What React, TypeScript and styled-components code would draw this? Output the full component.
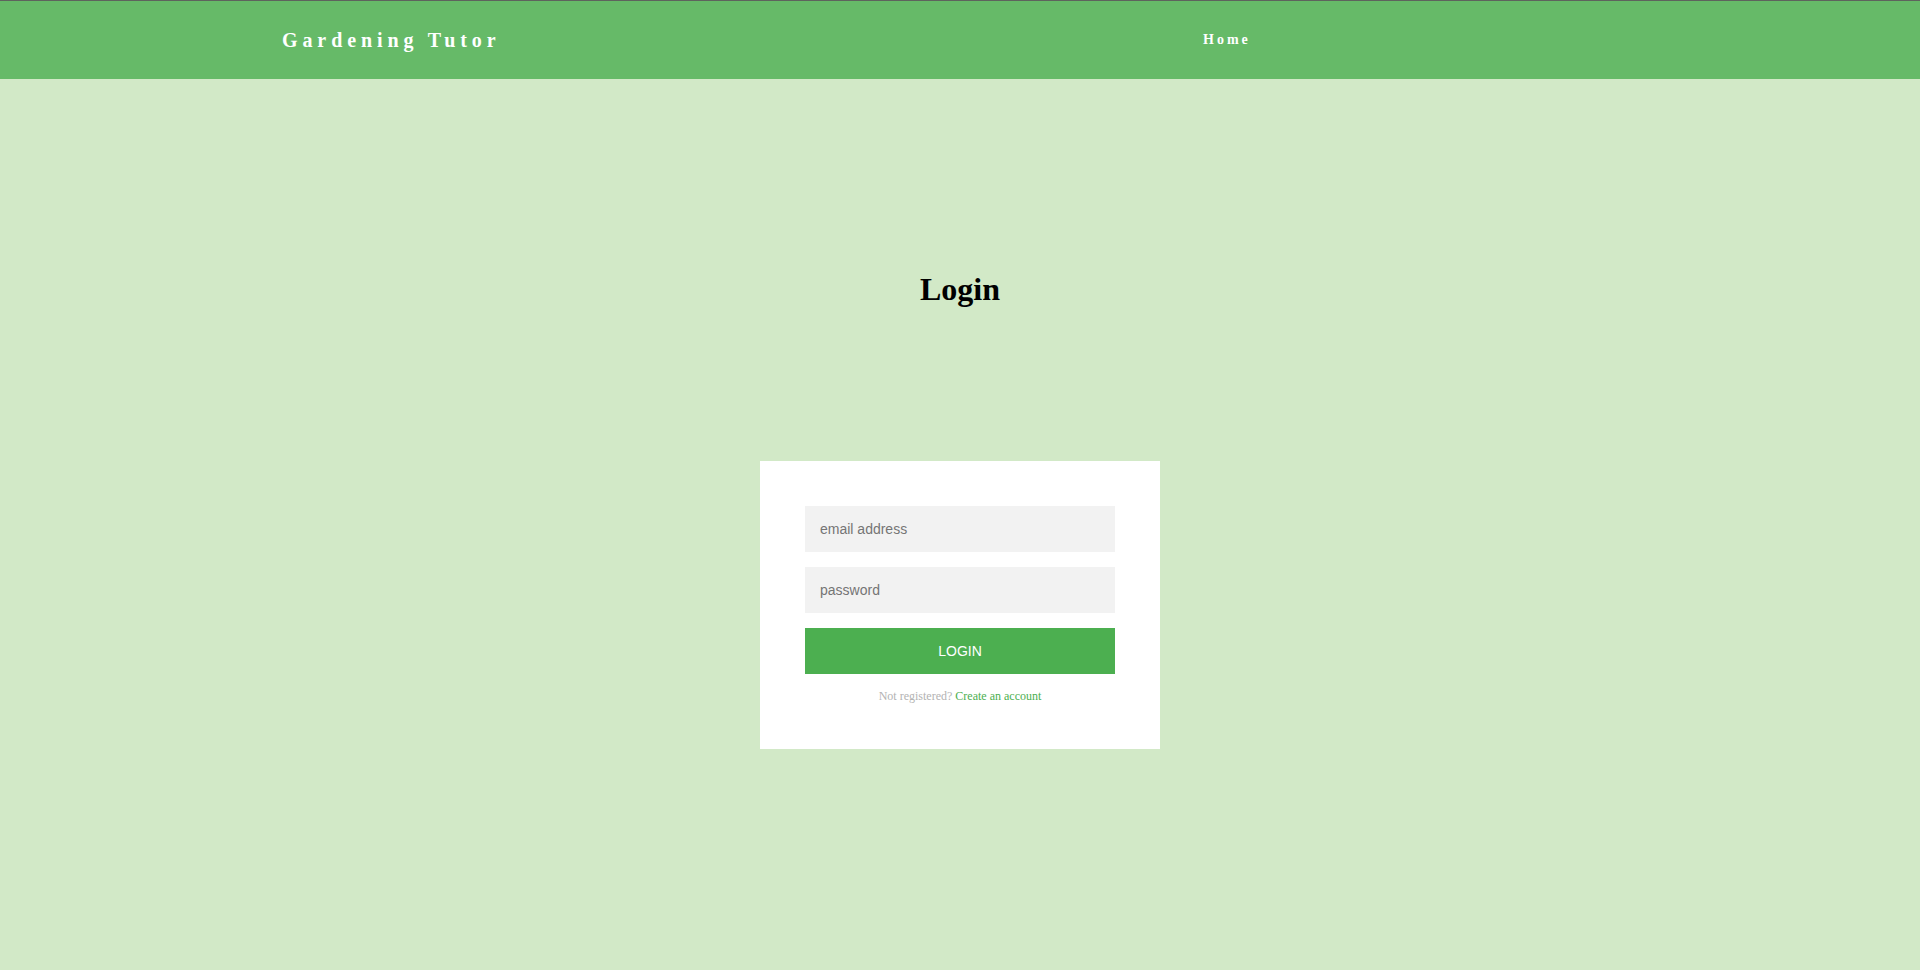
import React from "react";
import styled, { createGlobalStyle } from "styled-components";

const GlobalStyle = createGlobalStyle`
  html, body {
    margin: 0;
    padding: 0;
    background: #d2e9c7;
    font-family: "Liberation Serif", "Times New Roman", serif;
  }
  * { box-sizing: border-box; }
`;

const Page = styled.div`
  min-height: 970px;
  background: #d2e9c7;
`;

const Header = styled.header`
  height: 79px;
  border-top: 1px solid #5e635d;
  background: #66ba68;
  display: grid;
  grid-template-columns: 921px auto;
  align-items: center;
  padding-left: 282px;
`;

const Brand = styled.a`
  color: #ffffff;
  font-family: "Liberation Serif", "Times New Roman", serif;
  font-weight: bold;
  font-size: 20px;
  letter-spacing: 4.9px;
  text-decoration: none;
  white-space: nowrap;
`;

const NavLink = styled.a`
  color: #ffffff;
  font-family: "Liberation Serif", "Times New Roman", serif;
  font-weight: bold;
  font-size: 14px;
  letter-spacing: 3px;
  text-decoration: none;
`;

const Main = styled.main`
  display: flex;
  flex-direction: column;
  align-items: center;
  padding-top: 192px;
`;

const Title = styled.h1`
  margin: 0;
  font-family: "Liberation Serif", "Times New Roman", serif;
  font-size: 32px;
  font-weight: bold;
  color: #000;
  line-height: normal;
`;

const Card = styled.form`
  margin-top: 153px;
  width: 400px;
  background: #ffffff;
  padding: 45px;
  text-align: center;
  display: flex;
  flex-direction: column;
`;

const Field = styled.input`
  font-family: "Liberation Sans", Arial, sans-serif;
  outline: 0;
  background: #f2f2f2;
  width: 100%;
  border: 0;
  margin: 0 0 15px;
  padding: 15px;
  font-size: 14px;
  line-height: 16px;
  height: 46px;
  color: #333;
  &::placeholder {
    color: #757575;
  }
`;

const Submit = styled.button`
  font-family: "Liberation Sans", Arial, sans-serif;
  text-transform: uppercase;
  outline: 0;
  background: #4caf50;
  width: 100%;
  border: 0;
  padding: 15px;
  height: 46px;
  color: #ffffff;
  font-size: 14px;
  line-height: 16px;
  cursor: pointer;
`;

const Message = styled.p`
  margin: 15px 0 0;
  color: #b3b3b3;
  font-size: 12px;
  font-family: "Liberation Serif", "Times New Roman", serif;
  line-height: 15px;
`;

const MessageLink = styled.a`
  color: #4caf50;
  text-decoration: none;
`;

export default function App() {
  return (
    <Page>
      <GlobalStyle />
      <Header>
        <Brand href="#">Gardening Tutor</Brand>
        <NavLink href="#">Home</NavLink>
      </Header>
      <Main>
        <Title>Login</Title>
        <Card onSubmit={(e) => e.preventDefault()}>
          <Field type="text" placeholder="email address" />
          <Field type="password" placeholder="password" />
          <Submit type="submit">login</Submit>
          <Message>
            Not registered? <MessageLink href="#">Create an account</MessageLink>
          </Message>
        </Card>
      </Main>
    </Page>
  );
}
